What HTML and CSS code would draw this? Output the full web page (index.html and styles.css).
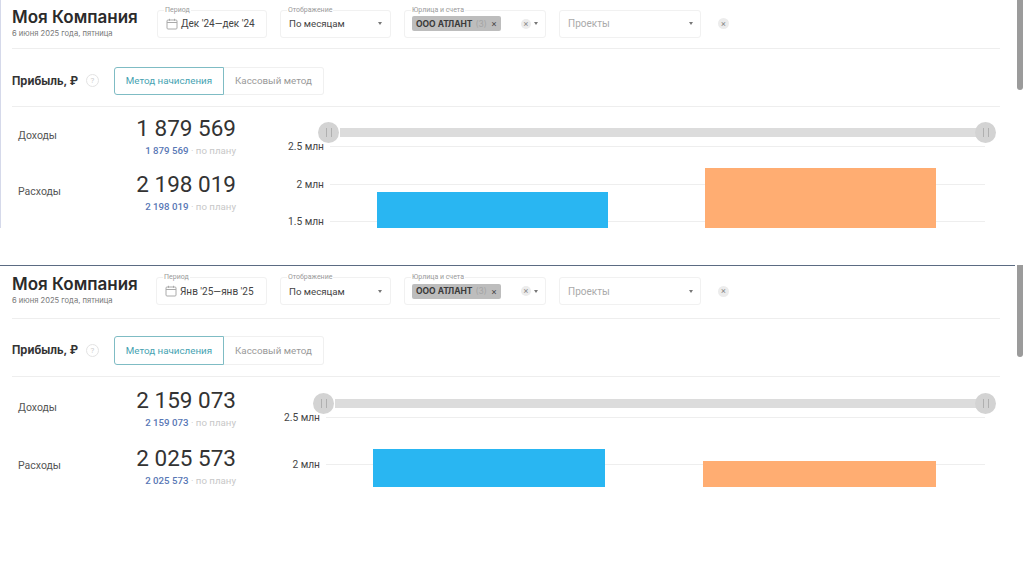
FILE: index.html
```html
<!DOCTYPE html>
<html lang="ru">
<head>
    <meta charset="UTF-8">
    <title>Прибыль</title>
    <meta name="viewport" content="width=device-width,initial-scale=1.0">
    <link rel="stylesheet" href="styles.css">
</head>
<body>
<div class="page">

    <!-- первый снимок: декабрь -->
    <section class="shot shotDec">
        <div class="topBar">
            <div class="company">
                <h1>Моя Компания</h1>
                <p>6 июня 2025 года, пятница</p>
            </div>
            <div class="filters">
                <div class="field fieldPeriod">
                    <span class="fieldLabel">Период</span>
                    <svg class="calendar" width="12" height="12" viewBox="0 0 12 12"><rect x="1" y="2" width="10" height="9" rx="1"/><path d="M1 4.5h10M3.5 .8v2M8.5 .8v2"/></svg>
                    <span class="fieldValue">Дек '24—дек '24</span>
                </div>
                <div class="field fieldView">
                    <span class="fieldLabel">Отображение</span>
                    <span class="fieldValue">По месяцам</span>
                    <i class="caret"></i>
                </div>
                <div class="field fieldWide">
                    <span class="fieldLabel">Юрлица и счета</span>
                    <span class="chip">ООО АТЛАНТ <em>(3)</em> <b>×</b></span>
                    <span class="clear">×</span>
                    <i class="caret"></i>
                </div>
                <div class="field fieldWide">
                    <span class="fieldValue muted">Проекты</span>
                    <i class="caret"></i>
                </div>
                <span class="clear clearAll">×</span>
            </div>
        </div>
        <div class="methodBar">
            <h2>Прибыль, ₽</h2>
            <span class="help">?</span>
            <div class="tabs">
                <span class="tab active">Метод начисления</span>
                <span class="tab">Кассовый метод</span>
            </div>
        </div>
        <div class="report">
            <div class="metrics">
                <div class="metric">
                    <span class="metricName">Доходы</span>
                    <div class="metricNums">
                        <div class="metricValue">1 879 569</div>
                        <div class="metricPlan"><b>1 879 569</b> · по плану</div>
                    </div>
                </div>
                <div class="metric">
                    <span class="metricName">Расходы</span>
                    <div class="metricNums">
                        <div class="metricValue">2 198 019</div>
                        <div class="metricPlan"><b>2 198 019</b> · по плану</div>
                    </div>
                </div>
            </div>
            <div class="chart">
                <div class="gridLine" style="top: 39px"><span>2.5 млн</span><i></i></div>
                <div class="gridLine" style="top: 77px"><span>2 млн</span><i></i></div>
                <div class="gridLine" style="top: 114px"><span>1.5 млн</span><i></i></div>
                <div class="bar barIncome" style="left: 97px; width: 231px; height: 36px"></div>
                <div class="bar barExpense" style="left: 425px; width: 231px; height: 60px"></div>
                <div class="slider" style="top: 15px; left: 38px"><i class="grip"></i><i class="track"></i><i class="grip"></i></div>
            </div>
        </div>
        <div class="scrollThumb"></div>
    </section>

    <!-- второй снимок: январь -->
    <section class="shot shotJan">
        <div class="topBar">
            <div class="company">
                <h1>Моя Компания</h1>
                <p>6 июня 2025 года, пятница</p>
            </div>
            <div class="filters">
                <div class="field fieldPeriod">
                    <span class="fieldLabel">Период</span>
                    <svg class="calendar" width="12" height="12" viewBox="0 0 12 12"><rect x="1" y="2" width="10" height="9" rx="1"/><path d="M1 4.5h10M3.5 .8v2M8.5 .8v2"/></svg>
                    <span class="fieldValue">Янв '25—янв '25</span>
                </div>
                <div class="field fieldView">
                    <span class="fieldLabel">Отображение</span>
                    <span class="fieldValue">По месяцам</span>
                    <i class="caret"></i>
                </div>
                <div class="field fieldWide">
                    <span class="fieldLabel">Юрлица и счета</span>
                    <span class="chip">ООО АТЛАНТ <em>(3)</em> <b>×</b></span>
                    <span class="clear">×</span>
                    <i class="caret"></i>
                </div>
                <div class="field fieldWide">
                    <span class="fieldValue muted">Проекты</span>
                    <i class="caret"></i>
                </div>
                <span class="clear clearAll">×</span>
            </div>
        </div>
        <div class="methodBar">
            <h2>Прибыль, ₽</h2>
            <span class="help">?</span>
            <div class="tabs">
                <span class="tab active">Метод начисления</span>
                <span class="tab">Кассовый метод</span>
            </div>
        </div>
        <div class="report">
            <div class="metrics">
                <div class="metric">
                    <span class="metricName">Доходы</span>
                    <div class="metricNums">
                        <div class="metricValue">2 159 073</div>
                        <div class="metricPlan"><b>2 159 073</b> · по плану</div>
                    </div>
                </div>
                <div class="metric">
                    <span class="metricName">Расходы</span>
                    <div class="metricNums">
                        <div class="metricValue">2 025 573</div>
                        <div class="metricPlan"><b>2 025 573</b> · по плану</div>
                    </div>
                </div>
            </div>
            <div class="chart">
                <div class="gridLine" style="top: 40px"><span>2.5 млн</span><i></i></div>
                <div class="gridLine" style="top: 87px"><span>2 млн</span><i></i></div>
                <div class="bar barIncome" style="left: 97px; width: 232px; height: 38px"></div>
                <div class="bar barExpense" style="left: 427px; width: 233px; height: 26px"></div>
                <div class="slider" style="top: 16px; left: 37px"><i class="grip"></i><i class="track"></i><i class="grip"></i></div>
            </div>
        </div>
        <div class="scrollThumb"></div>
    </section>

</div>
</body>
</html>
```

FILE: styles.css
```css
* {
    margin: 0;
    padding: 0;
    box-sizing: border-box;
}

html, body {
    height: 100%;
    overflow: hidden;
}

body {
    background-color: #fff;
    font-family: "Roboto", "Liberation Sans", sans-serif;
    color: #333;
}

.page {display: flex;flex-direction: column;gap: 37px;}

.shot {position: relative;overflow: hidden;display: flex;flex-direction: column;padding-right: 24px;}
.shotDec {height: 228px;border-left: 1px solid #d5d9ea;padding-left: 11px;}
.shotJan {height: 222px;padding-top: 1px;padding-left: 12px;}
.shotJan:before {content: " ";position: absolute;top: 0;left: 0;right: 9px;height: 1px;background: #5b6b82;}

/* шапка */
.topBar {flex: none;display: flex;align-items: center;border-bottom: 1px solid #eee;}
.shotDec .topBar {height: 49px;padding-bottom: 1px;}
.shotJan .topBar {height: 53px;padding-bottom: 2px;}

.company {width: 145px;margin-bottom: 2px;}
.shotJan .company {width: 144px;}
.company h1 {font-family: "Inter", "Liberation Sans", sans-serif;font-size: 17px;font-weight: 600;line-height: 20px;color: #2b2b2b;white-space: nowrap;}
.company p {margin-top: 2px;font-family: "Inter", "Liberation Sans", sans-serif;font-size: 7.6px;line-height: 10px;color: #777;white-space: nowrap;}

.filters {display: flex;align-items: center;gap: 13px;}

.field {position: relative;display: flex;align-items: center;height: 28px;padding: 0 8px;border: 1px solid #f1f1f1;border-radius: 3px;background: #fff;}
.fieldPeriod {width: 110px;}
.shotJan .fieldPeriod {width: 111px;}
.fieldView {width: 111px;}
.fieldWide {width: 142px;padding-right: 7px;}

.fieldLabel {position: absolute;top: -6px;left: 6px;padding: 0 1px;background: #fff;font-size: 7px;line-height: 10px;color: #999;white-space: nowrap;}
.fieldValue {font-size: 9.7px;color: #444;white-space: nowrap;}
.fieldPeriod .fieldValue {margin-left: 3px;font-size: 10px;}
.muted {font-size: 10px;color: #aaa;}

.calendar {flex: none;}
.calendar rect, .calendar path {fill: none;stroke: #aaa;stroke-width: 1;}

.caret {margin-left: auto;width: 0;height: 0;border-left: 2.5px solid transparent;border-right: 2.5px solid transparent;border-top: 3px solid #777;}
.fieldWide .clear + .caret {margin-left: 3px;}

.chip {display: flex;align-items: center;gap: 3px;height: 15px;width: 89px;padding: 0 4px;margin-left: -1px;border-radius: 2px;background: #bdbdbd;font-family: "Inter", "Liberation Sans", sans-serif;font-size: 8.5px;font-weight: 700;color: #3a3a3a;white-space: nowrap;}
.chip em {font-style: normal;font-weight: 400;color: #a5a5a5;}
.chip b {margin-left: auto;font-size: 9px;font-weight: 400;color: #444;}

.clear {display: flex;align-items: center;justify-content: center;width: 10px;height: 10px;margin-left: auto;border-radius: 50%;background: #ececec;font-size: 9px;line-height: 10px;color: #888;}
.clearAll {width: 11px;height: 11px;margin-left: 4px;}

/* метод */
.methodBar {flex: none;display: flex;align-items: center;height: 58px;border-bottom: 1px solid #eee;}
.shotDec .methodBar {padding-top: 6px;}
.shotJan .methodBar {padding-top: 5px;}
.methodBar h2 {font-family: "Inter", "Liberation Sans", sans-serif;font-size: 11.2px;font-weight: 700;color: #333;white-space: nowrap;}
.help {display: flex;align-items: center;justify-content: center;width: 13px;height: 13px;margin-left: 8px;border: 1px solid #e3e3e3;border-radius: 50%;font-size: 8px;color: #ccc;}
.tabs {display: flex;margin-left: 15px;}
.tab {display: flex;align-items: center;justify-content: center;height: 28px;width: 100px;border: 1px solid #f0f0f0;border-left: 0;border-radius: 0 3px 3px 0;font-size: 9.8px;color: #999;white-space: nowrap;}
.tab.active {width: 110px;border: 1px solid #7fbcc4;border-radius: 3px 0 0 3px;color: #46a2b1;}
.shotJan .tab {height: 29px;}

/* показатели и график */
.report {display: flex;flex: 1;min-height: 0;}
.metrics {display: flex;flex-direction: column;flex: none;}
.shotDec .metrics {width: 268px;padding-top: 8px;}
.shotJan .metrics {width: 264px;padding-top: 10px;}
.metric {flex: none;display: flex;justify-content: space-between;align-items: center;width: 224px;height: 45px;padding-left: 6px;}
.shotDec .metric {margin-bottom: 11px;}
.shotJan .metric {margin-bottom: 13px;}
.metricName {margin-bottom: 4px;font-size: 10.5px;color: #555;}
.metricNums {text-align: right;}
.metricValue {font-size: 22.5px;line-height: 26px;color: #333;white-space: nowrap;}
.metricPlan {font-size: 9.7px;line-height: 19px;color: #c8c8c8;white-space: nowrap;}
.metricPlan b {font-weight: 500;color: #5877b5;}

.chart {position: relative;flex: 1;}

.gridLine {position: absolute;left: 0;width: 705px;display: flex;align-items: center;gap: 6px;height: 0;}
.shotJan .gridLine {width: 709px;}
.gridLine span {flex: none;width: 44px;text-align: right;font-size: 10.2px;color: #444;}
.gridLine i {flex: 1;height: 1px;background: #eee;}

.bar {position: absolute;bottom: 0;}
.barIncome {background: #29b6f2;}
.barExpense {background: #ffad72;}

.slider {position: absolute;display: flex;align-items: center;width: 678px;height: 21px;}
.shotJan .slider {width: 683px;}
.track {flex: 1;height: 9px;margin: 0 -1px 0 1px;background: #dcdcdc;}
.grip {position: relative;flex: none;width: 21px;height: 21px;border-radius: 50%;background: #d3d3d3;}
.grip:after {content: " ";position: absolute;top: 6px;left: 8px;width: 4px;height: 9px;border-left: 1px solid #b0b0b0;border-right: 1px solid #b0b0b0;}

.scrollThumb {position: absolute;top: 0;right: 1px;width: 6px;height: 90px;border-radius: 0 0 3px 3px;background: #9b9b9b;}
.shotJan .scrollThumb {height: 92px;}
```
